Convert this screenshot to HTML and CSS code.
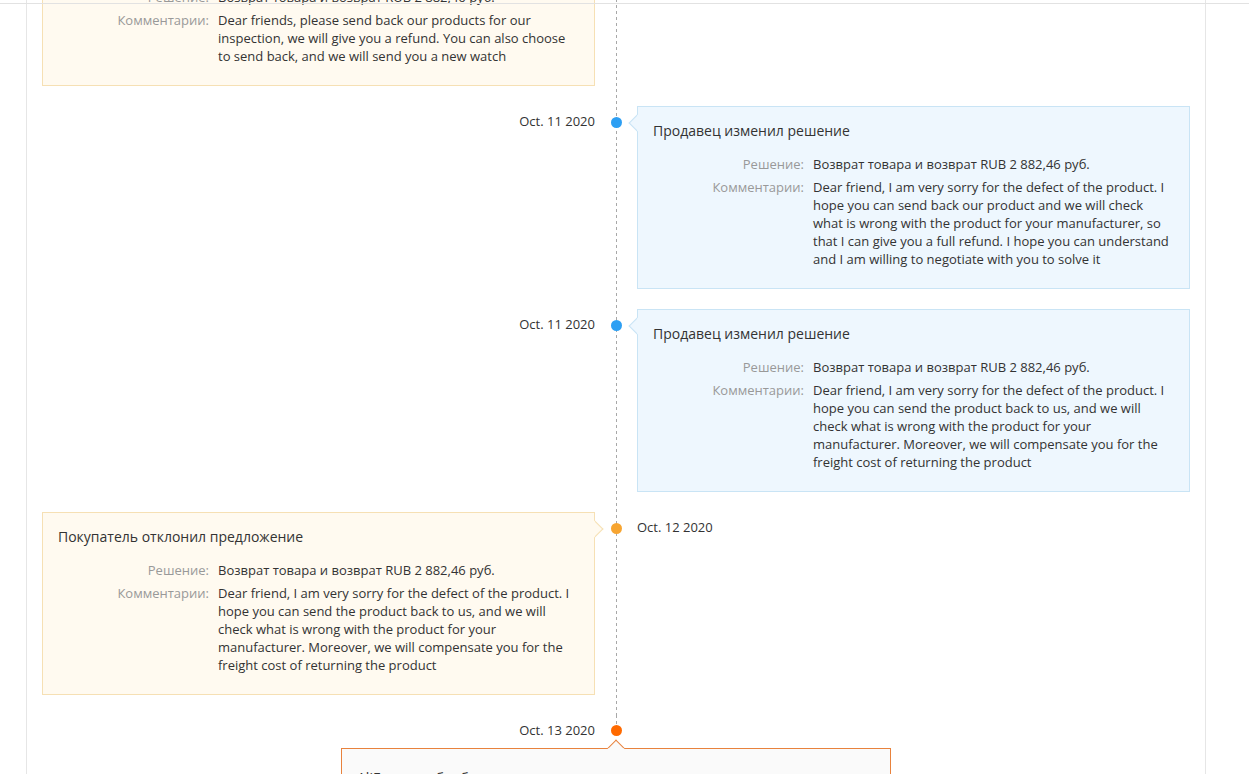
FILE: index.html
```html
<!DOCTYPE html>
<html>

<head>
    <meta charset="UTF-8">
    <meta name="viewport" content="width=device-width, initial-scale=1.0">
    <title>История спора</title>
    <link rel="stylesheet" href="styles.css">
</head>

<body>
    <div class="top-line"></div>
    <div class="page">
        <div class="timeline">
            <!-- buyer: left card, date on the right -->
            <div class="event">
                <div class="side side-left">
                    <div class="card card-buyer">
                        <div class="card-title">Покупатель отклонил предложение</div>
                        <div class="row">
                            <span class="label">Решение:</span>
                            <span class="value">Возврат товара и возврат RUB 2 882,46 руб.</span>
                        </div>
                        <div class="row">
                            <span class="label">Комментарии:</span>
                            <span class="value">Dear friends, please send back our products for our inspection, we will give you a refund. You can also choose to send back, and we will send you a new watch</span>
                        </div>
                    </div>
                </div>
                <div class="axis"><span class="dot dot-buyer"></span></div>
                <div class="side side-right"><span class="date">Oct. 10 2020</span></div>
            </div>

            <!-- seller: date on the left, right card -->
            <div class="event">
                <div class="side side-left"><span class="date">Oct. 11 2020</span></div>
                <div class="axis"><span class="dot dot-seller"></span></div>
                <div class="side side-right">
                    <div class="card card-seller">
                        <div class="card-title">Продавец изменил решение</div>
                        <div class="row">
                            <span class="label">Решение:</span>
                            <span class="value">Возврат товара и возврат RUB 2 882,46 руб.</span>
                        </div>
                        <div class="row">
                            <span class="label">Комментарии:</span>
                            <span class="value">Dear friend, I am very sorry for the defect of the product. I hope you can send back our product and we will check what is wrong with the product for your manufacturer, so that I can give you a full refund. I hope you can understand and I am willing to negotiate with you to solve it</span>
                        </div>
                    </div>
                </div>
            </div>

            <div class="event">
                <div class="side side-left"><span class="date">Oct. 11 2020</span></div>
                <div class="axis"><span class="dot dot-seller"></span></div>
                <div class="side side-right">
                    <div class="card card-seller">
                        <div class="card-title">Продавец изменил решение</div>
                        <div class="row">
                            <span class="label">Решение:</span>
                            <span class="value">Возврат товара и возврат RUB 2 882,46 руб.</span>
                        </div>
                        <div class="row">
                            <span class="label">Комментарии:</span>
                            <span class="value">Dear friend, I am very sorry for the defect of the product. I hope you can send the product back to us, and we will check what is wrong with the product for your manufacturer. Moreover, we will compensate you for the freight cost of returning the product</span>
                        </div>
                    </div>
                </div>
            </div>

            <div class="event">
                <div class="side side-left">
                    <div class="card card-buyer">
                        <div class="card-title">Покупатель отклонил предложение</div>
                        <div class="row">
                            <span class="label">Решение:</span>
                            <span class="value">Возврат товара и возврат RUB 2 882,46 руб.</span>
                        </div>
                        <div class="row">
                            <span class="label">Комментарии:</span>
                            <span class="value">Dear friend, I am very sorry for the defect of the product. I hope you can send the product back to us, and we will check what is wrong with the product for your manufacturer. Moreover, we will compensate you for the freight cost of returning the product</span>
                        </div>
                    </div>
                </div>
                <div class="axis"><span class="dot dot-buyer"></span></div>
                <div class="side side-right"><span class="date">Oct. 12 2020</span></div>
            </div>
        </div>

        <!-- platform decision: centered card -->
        <div class="final">
            <div class="final-head">
                <div class="side side-left"><span class="date">Oct. 13 2020</span></div>
                <div class="axis axis-end"><span class="dot dot-platform"></span></div>
                <div class="side side-right"></div>
            </div>
            <div class="card card-platform">
                <div class="card-title">AliExpress обработал спор</div>
                <div class="row">
                    <span class="label">Решение:</span>
                    <span class="value">Возврат товара и возврат RUB 2 882,46 руб.</span>
                </div>
            </div>
        </div>
    </div>
</body>

</html>
```

FILE: styles.css
```css
body {
    font-family: "Open Sans", "Noto Sans", sans-serif;
    font-size: 13px;
    color: #333;
    background-color: #fff;
    margin: 0;
    padding: 0;
    overflow: hidden;
}

.top-line {
    position: fixed;
    top: 3px;
    left: 0;
    right: 0;
    height: 1px;
    background-color: #e2e2e2;
    z-index: 5;
}

.page {
    width: 1148px;
    margin-left: 26px;
    margin-top: -61px;
    padding: 0 15px 40px;
    border-left: 1px solid #e6e6e6;
    border-right: 1px solid #e6e6e6;
}

.timeline {
    background: repeating-linear-gradient(to bottom, #a8a8a8 0 3px, transparent 3px 6px) center top / 1px 100% no-repeat;
}

.event {
    display: grid;
    grid-template-columns: 1fr 42px 1fr;
    padding-bottom: 20px;
}

.side-left {
    text-align: right;
}

.side-right {
    text-align: left;
}

.axis {
    display: flex;
    justify-content: center;
}

.dot {
    width: 11px;
    height: 11px;
    border-radius: 50%;
    margin-top: 11px;
}

.dot-buyer {
    background-color: #f7a531;
}

.dot-seller {
    background-color: #2d9ff3;
}

.dot-platform {
    background-color: #ff6a00;
}

.date {
    display: inline-block;
    margin-top: 6px;
    line-height: 18px;
    font-size: 13px;
    color: #333;
}

.card {
    position: relative;
    text-align: left;
    padding: 15px 16px 20px 15px;
    border: 1px solid;
}

.card::before {
    content: "";
    position: absolute;
    width: 10px;
    height: 10px;
    border: 1px solid;
    transform: rotate(45deg);
}

.card-buyer {
    background-color: #fffaf0;
    border-color: #f6e0b4;
}

.card-buyer::before {
    top: 10px;
    right: -7px;
    background-color: #fffaf0;
    border-color: #f6e0b4 #f6e0b4 transparent transparent;
}

.card-seller {
    background-color: #eef7fe;
    border-color: #c9e4f5;
}

.card-seller::before {
    top: 10px;
    left: -7px;
    background-color: #eef7fe;
    border-color: transparent transparent #c9e4f5 #c9e4f5;
}

.card-title {
    font-size: 14px;
    line-height: 18px;
    margin-bottom: 15px;
}

.row {
    display: grid;
    grid-template-columns: 151px 1fr;
    column-gap: 9px;
    line-height: 18px;
    font-size: 13px;
    margin-bottom: 5px;
}

.row:last-child {
    margin-bottom: 0;
}

.label {
    text-align: right;
    color: #999;
}

.final-head {
    display: grid;
    grid-template-columns: 1fr 42px 1fr;
    height: 33px;
}

.axis-end {
    background: repeating-linear-gradient(to bottom, #a8a8a8 0 3px, transparent 3px 6px) center top / 1px 12px no-repeat;
}

.final-head .dot {
    margin-top: 10px;
}

.final-head .date {
    margin-top: 6px;
}

.card-platform {
    width: 517px;
    margin: 0 auto;
    background-color: #fafafa;
    border: 1px solid #e8823d;
    padding-top: 20px;
}

.card-platform::before {
    top: -7px;
    left: 50%;
    margin-left: -6px;
    background-color: #fafafa;
    border-color: #e8823d transparent transparent #e8823d;
}
```
